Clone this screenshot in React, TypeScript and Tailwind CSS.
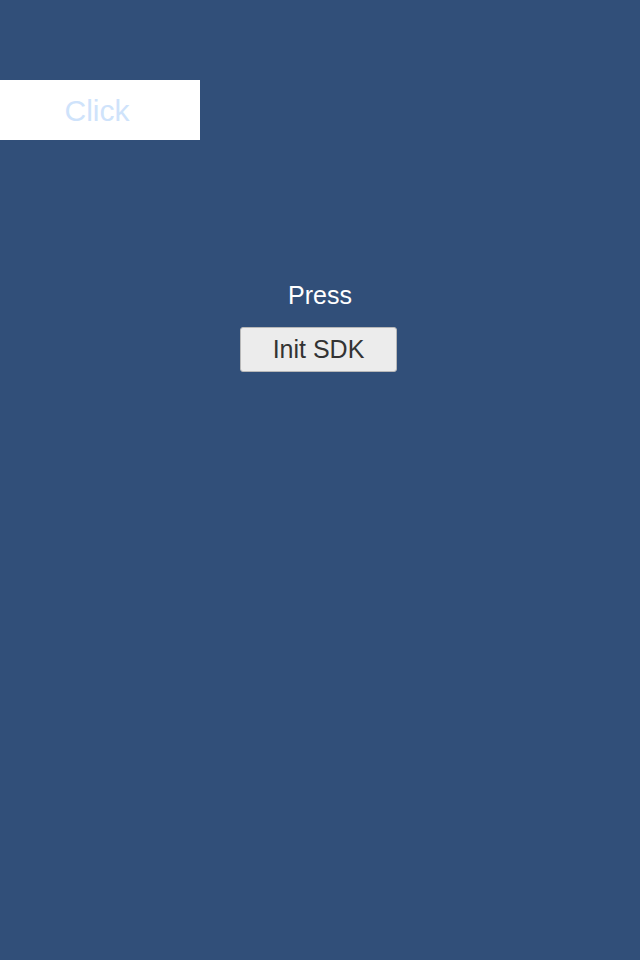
import React from 'react';

const App: React.FC = () => {
  return (
    <div className="w-[640px] h-[960px] bg-[#314f79] font-['Liberation_Sans',Arial,sans-serif] flex flex-col">
      {/* Top-left click panel */}
      <div className="mt-[80px] w-[200px] h-[60px] bg-white flex items-center justify-center">
        <span className="mr-[6px] mt-[2px] text-[30px] leading-none text-[#cfe3fb]">Click</span>
      </div>

      {/* Centered init block */}
      <div className="mt-[140px] flex flex-col items-center">
        <p className="text-[25px] leading-[30px] text-white">Press</p>
        <button className="mt-[17px] ml-[-3px] w-[157px] h-[45px] bg-[#ececec] border border-[#b8b8b8] rounded-[3px] text-[25px] leading-none text-[#333333]">
          Init SDK
        </button>
      </div>
    </div>
  );
};

export default App;
